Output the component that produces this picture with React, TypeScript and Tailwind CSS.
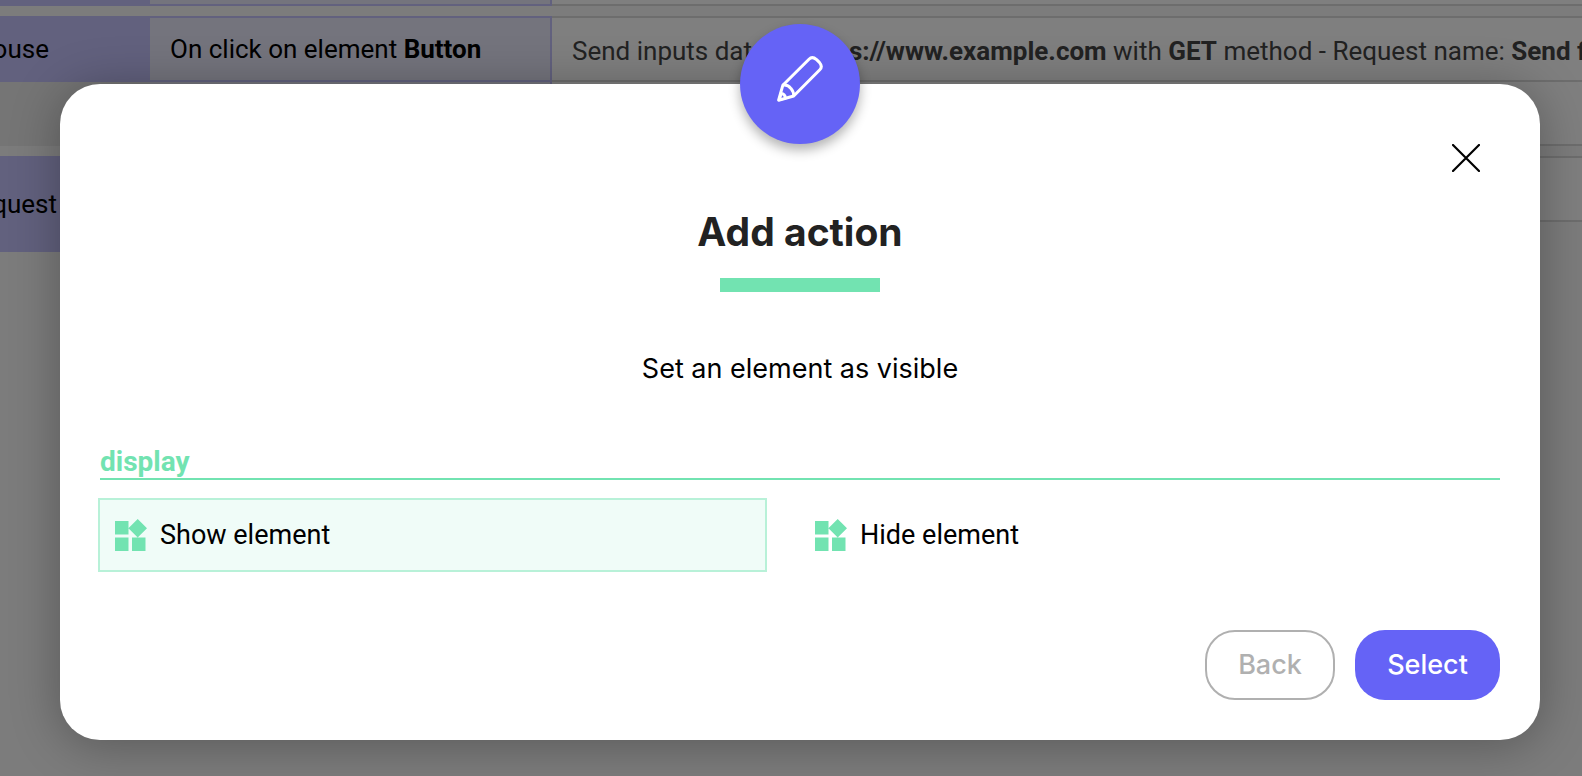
import { useState, type ReactNode } from "react";

interface EventRowProps {
  kind?: string;
  kindClass?: string;
  event?: ReactNode;
  children?: ReactNode;
}

function EventRow({ kind, kindClass = "", event, children }: EventRowProps) {
  return (
    <div className="flex text-black">
      <div className={`flex w-[150px] shrink-0 items-center justify-end overflow-hidden bg-[#c5c3fd] ${kindClass}`}>
        {kind}
      </div>
      <div className="flex w-[402px] shrink-0 items-center border-y-2 border-r-2 border-[#c5c3fd] bg-[#e9e9fb] pl-5 whitespace-nowrap">
        <p>{event}</p>
      </div>
      <div className="flex h-[66px] min-w-0 flex-1 items-center overflow-hidden border-y-2 border-[#dadada] bg-white pt-1 pl-5 whitespace-nowrap text-[#444]">
        <p>{children}</p>
      </div>
    </div>
  );
}

function EventList() {
  return (
    <div className="flex h-screen flex-col overflow-hidden bg-[#f9f9f9] font-['Roboto',sans-serif] text-[26px] leading-8">
      <div className="flex h-[6px] shrink-0">
        <div className="w-[150px] bg-[#c5c3fd]" />
        <div className="w-[402px] border-r-2 border-b-2 border-[#c5c3fd] bg-[#e9e9fb]" />
        <div className="flex-1 border-b-2 border-[#dadada] bg-white" />
      </div>
      <div className="mt-[10px] bg-[#ebebeb]">
        <EventRow
          kind="Mouse"
          kindClass="pr-[101px]"
          event={<>On click on element <b>Button</b></>}
        >
          Send inputs data to <b>https://www.example.com</b> with <b>GET</b> method - Request name: <b>Send form</b>
        </EventRow>
        <div className="flex h-16">
          <div className="w-[150px]" />
          <div className="w-[402px] border-r-2 border-[#c5c3fd] bg-[#e9e9fb]" />
          <div className="flex-1 border-b-2 border-[#dadada] bg-white" />
        </div>
      </div>
      <div className="mt-[10px] flex h-24 shrink-0">
        <div className="flex w-[150px] items-center justify-end overflow-hidden bg-[#c5c3fd] pr-[93px] text-black">
          Request
        </div>
        <div className="flex-1">
          <div className="h-[66px] border-y-2 border-[#dadada] bg-white" />
        </div>
      </div>
    </div>
  );
}

function PencilIcon() {
  return (
    <svg width="46" height="46" viewBox="0 0 46 46" fill="none" stroke="white" strokeWidth="3" strokeLinejoin="round" aria-hidden="true">
      <path d="M1.6 44.2 5.8 29.3 32 3.2C34 1.2 37 1.4 39.6 3.6l2.8 2.8c2.2 2.6 2.4 5.4.4 7.4L16.7 40Z" />
      <path d="M5.8 29.3c3.8-.8 6.4 1 8.2 3.3 2 2.3 2.8 4.6 2.7 7.4" />
      <path d="M4 37.5c2.4.2 4.2 2 4.5 4.6L2.5 43.6Z" />
    </svg>
  );
}

function WidgetIcon() {
  return (
    <svg width="32" height="32" viewBox="0 0 32 32" fill="#72e3b1" aria-hidden="true">
      <path d="M0 2h13.5v13.5H0zM0 18.5h13.5V32H0zM17 18.5h13.5V32H17zM22.7 0 32 9.3l-9.3 9.3-9.3-9.3z" />
    </svg>
  );
}

const actions = ["Show element", "Hide element"];

export default function App() {
  const [selected, setSelected] = useState("Show element");

  return (
    <div className="relative">
      <EventList />
      <div className="absolute inset-0 bg-black/50 pt-[84px] pr-[42px] pl-[60px]">
        <div
          role="dialog"
          aria-labelledby="dialog-title"
          className="relative flex flex-col rounded-[40px] bg-white px-10 pt-[60px] pb-10 font-['Inter',sans-serif] shadow-[0_4px_50px_rgba(0,0,0,0.3)]"
        >
          <div className="absolute -top-[60px] left-1/2 flex size-[120px] -translate-x-1/2 items-center justify-center rounded-full bg-[#6563f6] pb-[10px] shadow-[0_6px_12px_rgba(0,0,0,0.3)]">
            <PencilIcon />
          </div>
          <button type="button" aria-label="Close" className="mr-5 self-end">
            <svg width="28" height="28" viewBox="0 0 28 28" stroke="black" strokeWidth="2.2" strokeLinecap="round" aria-hidden="true">
              <path d="m1 1 26 26M27 1 1 27" />
            </svg>
          </button>
          <h2 id="dialog-title" className="mt-9 text-center text-[39px] leading-[48px] font-bold text-[#222]">
            Add action
          </h2>
          <div className="mt-[22px] h-[14px] w-40 self-center bg-[#72e3b1]" />
          <p className="mt-[60px] text-center text-[27px] leading-[34px] text-black">Set an element as visible</p>
          <h3 className="mt-[60px] border-b-2 border-[#72e3b1] font-['Roboto',sans-serif] text-[28px] leading-8 font-bold text-[#72e3b1]">
            display
          </h3>
          <div className="mt-5 grid grid-cols-2 font-['Roboto',sans-serif] text-[27px] leading-8 text-black">
            {actions.map((action) => (
              <button
                key={action}
                type="button"
                aria-pressed={selected === action}
                onClick={() => setSelected(action)}
                className={`mr-[35px] flex h-[70px] items-center gap-[13px] px-[15px] ${
                  selected === action ? "bg-[#f0fcf8] outline-2 outline-[#b8f1d8]" : ""
                }`}
              >
                <WidgetIcon />
                {action}
              </button>
            ))}
          </div>
          <div className="mt-[60px] flex justify-end gap-5 text-[27px] font-medium">
            <button type="button" className="h-[70px] w-[130px] rounded-[30px] border-2 border-[#b0b0b0] text-[#b0b0b0]">
              Back
            </button>
            <button type="button" className="h-[70px] w-[145px] rounded-[30px] bg-[#6563f6] text-white">
              Select
            </button>
          </div>
        </div>
      </div>
    </div>
  );
}
